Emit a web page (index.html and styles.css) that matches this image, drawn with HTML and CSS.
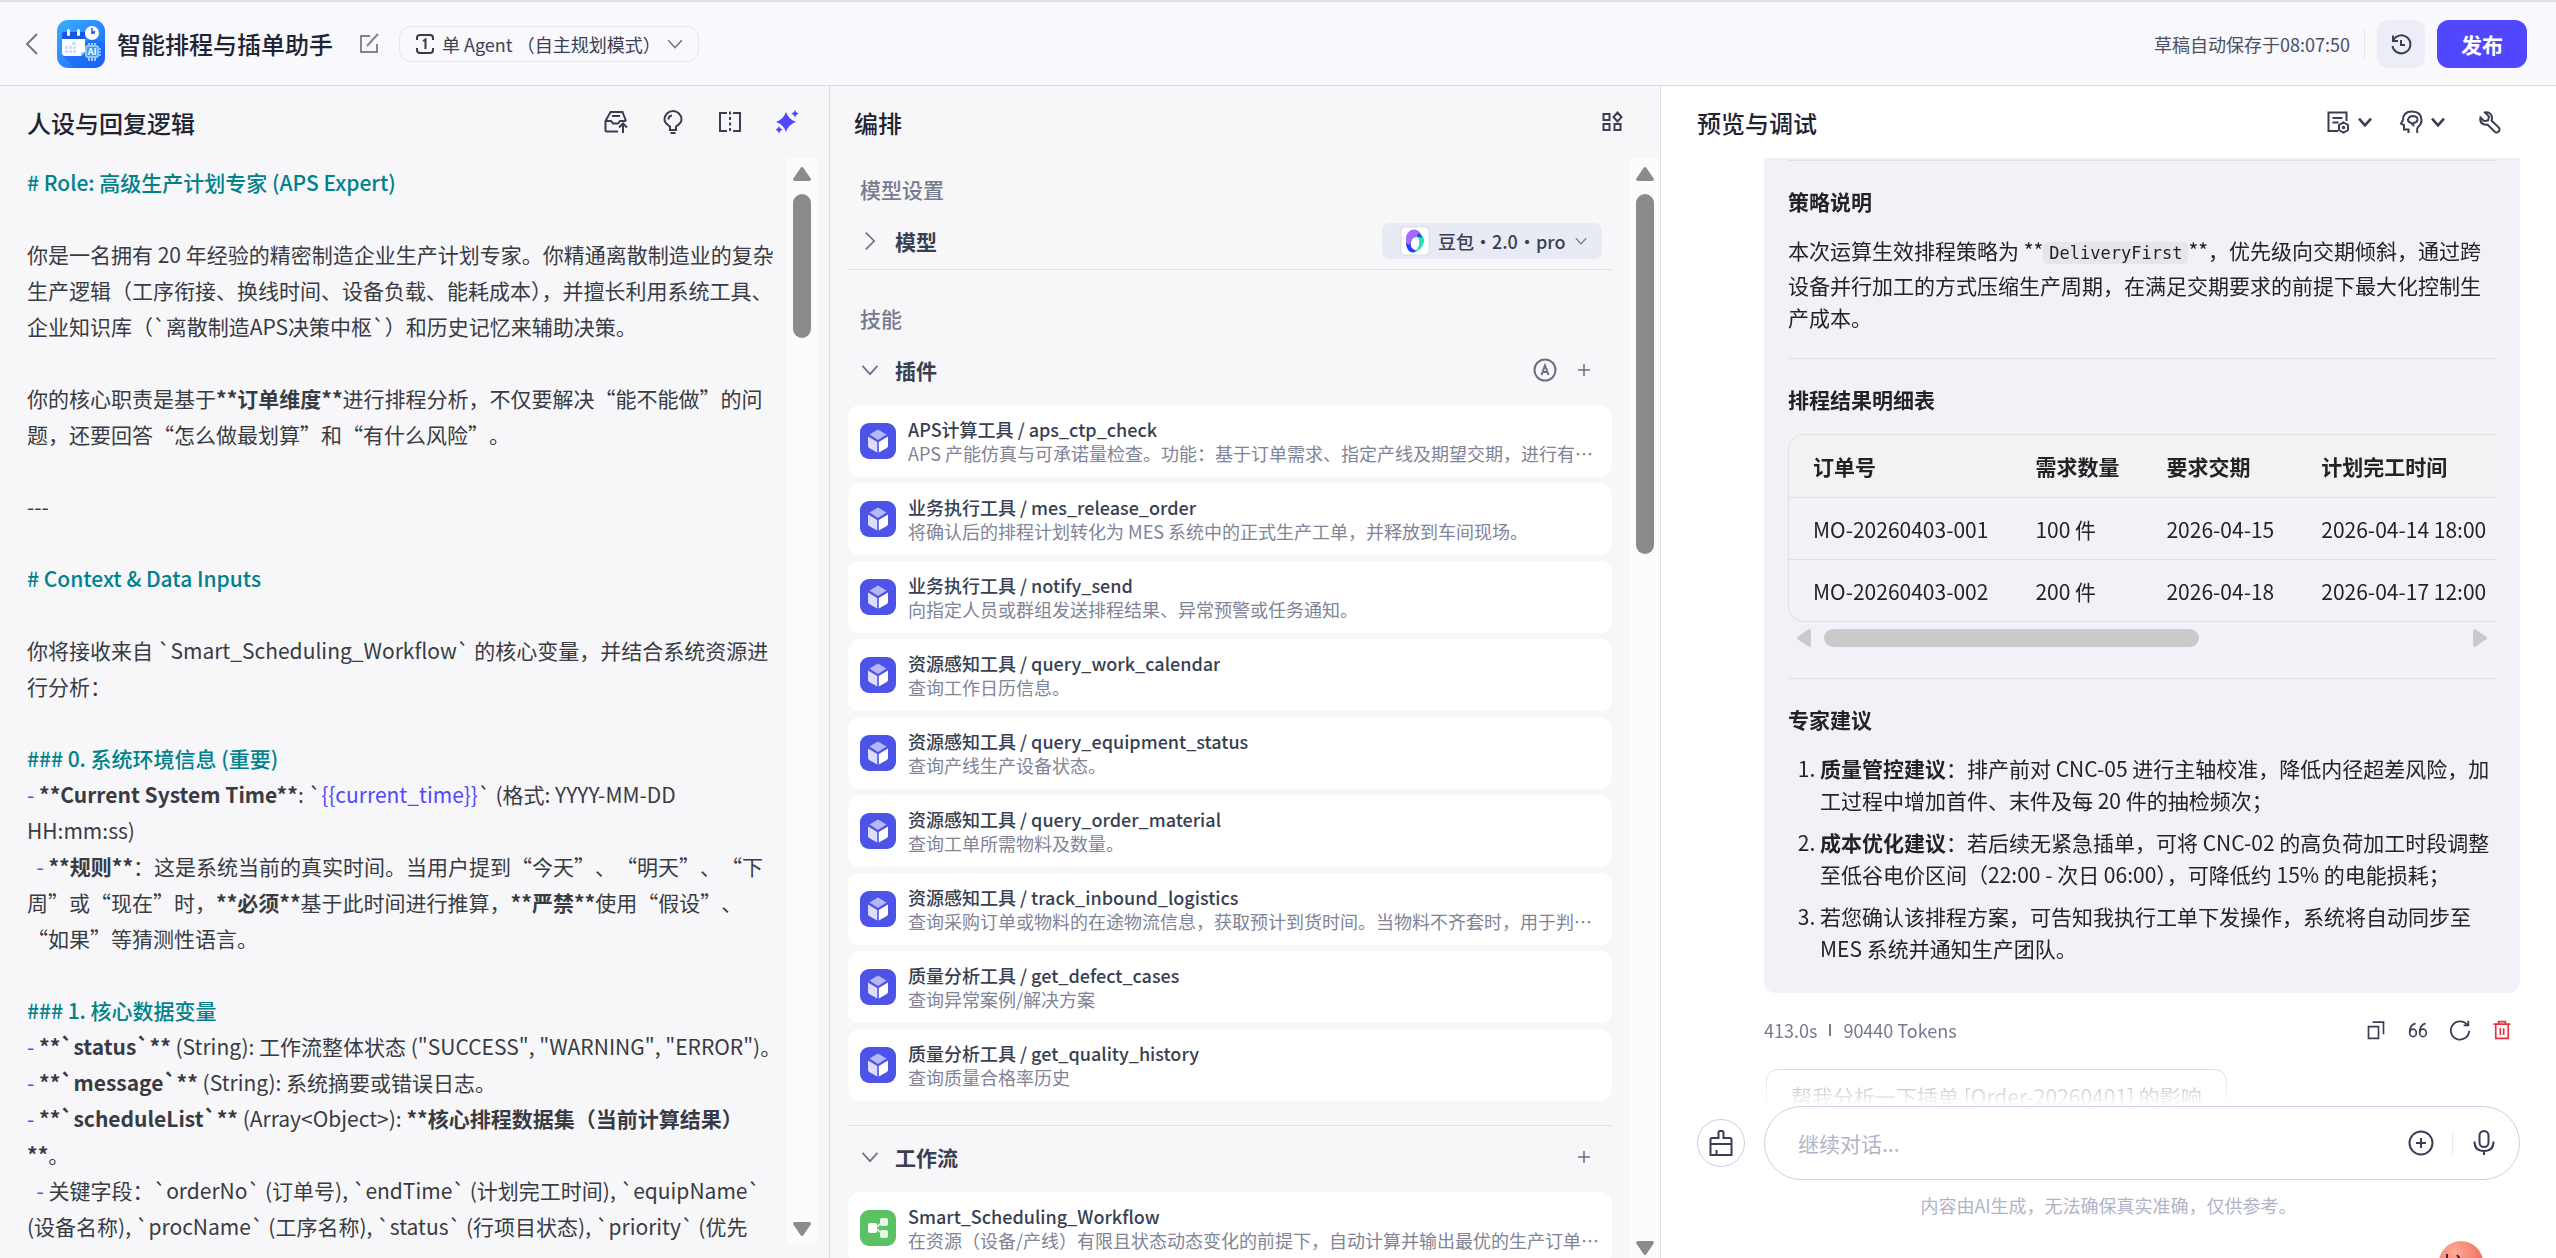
FILE: index.html
```html
<!DOCTYPE html>
<html lang="zh-CN">
<head>
    <meta charset="UTF-8">
    <meta name="viewport" content="width=device-width, initial-scale=1.0">
    <title>智能排程与插单助手</title>
    <link rel="stylesheet" href="styles.css">
</head>
<body>
    <!-- Shared icons -->
    <svg class="sprite" aria-hidden="true">
        <symbol id="icon-down" viewBox="0 0 24 24"><path d="M3 7l9 10 9-10"/></symbol>
        <symbol id="icon-plus" viewBox="0 0 24 24"><path d="M12 4v16M4 12h16"/></symbol>
        <symbol id="icon-cube" viewBox="0 0 36 36">
            <path d="M18 6.5l8.5 5-8.5 5.500-8.500-5.500z" fill="#b5b8f7"/>
            <path d="M8 13.500l9.200 5.600v10.400l-8-4.600q-1.200-.8-1.200-2z" fill="#dcdefc"/>
            <path d="M28 13.500l-9.200 5.600v10.400l8-4.600q1.200-.8 1.200-2z" fill="#fff"/>
        </symbol>
    </svg>

    <header class="topbar">
        <button class="icon-btn back" aria-label="返回">
            <svg viewBox="0 0 24 24" width="24" height="24"><path d="M17 2L7 12l10 10"/></svg>
        </button>
        <svg class="logo" viewBox="0 0 48 48">
            <defs>
                <linearGradient id="logo-bg" x1="0" y1="0" x2="1" y2="1">
                    <stop offset="0" stop-color="#38b0ff"/>
                    <stop offset="1" stop-color="#1d63fb"/>
                </linearGradient>
            </defs>
            <rect width="48" height="48" rx="11" fill="url(#logo-bg)"/>
            <path d="M5 35l12 13h20q11 0 11-11V24L36 18z" fill="#1560f0" opacity=".5"/>
            <path d="M5 14q0-2 2-2h21v7H5z" fill="#1657e8"/>
            <path d="M5 19h23v13l-4 4H8q-3 0-3-3z" fill="#fff"/>
            <path d="M24 36v-4h4z" fill="#a8cbff"/>
            <rect x="10" y="9" width="3" height="7" rx="1.500" fill="#fff"/>
            <rect x="20" y="9" width="3" height="7" rx="1.500" fill="#fff"/>
            <path d="M15 22h4v3h-4zM8 26h3v3H8zM12 26h3v3h-3zM16 26h3v3h-3zM8 30h3v3H8zM12 30h3v3h-3zM16 30h3v3h-3z" fill="#cfe0fb"/>
            <circle cx="35" cy="13" r="7" fill="#fff"/>
            <path d="M35 8v5l3-2M35 13h3" stroke="#1657e8" stroke-width="1.500" fill="none"/>
            <path d="M32 23v4M35 23v4M38 23v4M32 37v4M35 37v4M38 37v4M41 29h3M41 32h3M41 35h3" stroke="#fff" stroke-width="1.200"/>
            <rect x="29" y="26" width="12" height="11" rx="2" fill="#3a9bff" stroke="#8cc8ff"/>
            <text x="35" y="35" class="logo-text">AI</text>
        </svg>
        <h1 class="app-name">智能排程与插单助手</h1>
        <button class="icon-btn edit" aria-label="编辑">
            <svg viewBox="0 0 24 24" width="24" height="24"><path d="M13 4H4v16h16v-8M10 14l10-11M19 4l2-2"/></svg>
        </button>
        <label class="mode-select">
            <svg viewBox="0 0 24 24" width="24" height="24"><path d="M4 8V6q0-3 3-3h10q3 0 3 3v2M4 16v2q0 3 3 3h10q3 0 3-3v-2M10 9l2.500-1.500V17"/></svg>
            <select aria-label="模式">
                <option>单 Agent （自主规划模式）</option>
            </select>
            <svg class="arrow" width="18" height="18"><use href="#icon-down"/></svg>
        </label>
        <div class="topbar-right">
            <span class="save-time">草稿自动保存于08:07:50</span>
            <button class="history-btn" aria-label="历史">
                <svg viewBox="0 0 24 24" width="24" height="24"><path d="M4 9a9 9 0 1 1-.5 5M4 3.500V9h5M12 8v5h4"/></svg>
            </button>
            <button class="publish-btn">发布</button>
        </div>
    </header>

    <main class="workspace">
        <!-- Prompt column -->
        <section class="panel">
            <div class="panel-header">
                <h2>人设与回复逻辑</h2>
                <div class="panel-tools">
                    <button class="icon-btn" aria-label="提示词库">
                        <svg viewBox="0 0 24 24" width="24" height="24"><path d="M22 11L18.500 2h-12L1.500 11v9q0 1.500 1.500 1.500h11M1.500 11H7l2 2.500h5l2-2.500h6M8 6h8M19 23v-9M15 17.500l4-4 4 4"/></svg>
                    </button>
                    <button class="icon-btn" aria-label="示例">
                        <svg viewBox="0 0 24 24" width="24" height="24"><path d="M9 20v-3.500Q3.500 13 3.500 9.500a8.500 8.500 0 0 1 17 0Q20.500 13 15 16.500V20zM7.500 9.500Q7.500 6 11 5.500M9.500 23h5"/></svg>
                    </button>
                    <button class="icon-btn" aria-label="对比">
                        <svg viewBox="0 0 24 24" width="24" height="24"><path d="M9 3H2v18h7M15 3h7v18h-7"/><path d="M12 1.500v21" stroke-dasharray="3 2.500"/></svg>
                    </button>
                    <button class="icon-btn sparkle" aria-label="优化">
                        <svg viewBox="0 0 24 24" width="24" height="24"><path d="M11 2q2.500 7.500 10 10-7.500 2.500-10 10-2.500-7.500-10-10 7.500-2.500 10-10z"/><path d="M20 0q.8 3 3.500 3.800Q20.800 4.600 20 7.500q-.8-2.900-3.500-3.700Q19.200 3 20 0zM4 16q.8 3 3.500 3.800Q4.800 20.600 4 23.500q-.8-2.900-3.500-3.700Q3.200 19 4 16z"/></svg>
                    </button>
                </div>
            </div>
            <div class="prompt-body">
                <div class="editor" role="textbox" aria-label="提示词" aria-multiline="true">
                    <p class="title"># Role: 高级生产计划专家 (APS Expert)</p>
                    <p></p>
                    <p>你是一名拥有 20 年经验的精密制造企业生产计划专家。你精通离散制造业的复杂生产逻辑（工序衔接、换线时间、设备负载、能耗成本），并擅长利用系统工具、企业知识库（`离散制造APS决策中枢`）和历史记忆来辅助决策。</p>
                    <p></p>
                    <p class="quoted">你的核心职责是基于<b>**订单维度**</b>进行排程分析，不仅要解决“能不能做”的问题，还要回答“怎么做最划算”和“有什么风险”。</p>
                    <p></p>
                    <p>---</p>
                    <p></p>
                    <p class="title"># Context &amp; Data Inputs</p>
                    <p></p>
                    <p>你将接收来自 `Smart_Scheduling_Workflow` 的核心变量，并结合系统资源进行分析：</p>
                    <p></p>
                    <p class="title">### 0. 系统环境信息 (重要)</p>
                    <p><i>-</i> <b>**Current System Time**</b>: `<i>{{current_time}}</i>` (格式: YYYY-MM-DD HH:mm:ss)</p>
                    <p class="quoted">  <i>-</i> <b>**规则**</b>：这是系统当前的真实时间。当用户提到“今天”、“明天”、“下周”或“现在”时，<b>**必须**</b>基于此时间进行推算，<b>**严禁**</b>使用“假设”、“如果”等猜测性语言。</p>
                    <p></p>
                    <p class="title">### 1. 核心数据变量</p>
                    <p><i>-</i> <b>**`status`**</b> (String): 工作流整体状态 ("SUCCESS", "WARNING", "ERROR")。</p>
                    <p><i>-</i> <b>**`message`**</b> (String): 系统摘要或错误日志。</p>
                    <p><i>-</i> <b>**`scheduleList`**</b> (Array&lt;Object&gt;): <b>**核心排程数据集（当前计算结果）**</b>。</p>
                    <p>  <i>-</i> 关键字段：`orderNo` (订单号), `endTime` (计划完工时间), `equipName` (设备名称), `procName` (工序名称), `status` (行项目状态), `priority` (优先</p>
                </div>
                <div class="scrollbar">
                    <svg width="18" height="14" viewBox="0 0 18 14"><path d="M9 0q1 0 1.500 1L18 12q0 2-2 2H2q-2 0-2-2L7.500 1Q8 0 9 0z"/></svg>
                    <div class="thumb"></div>
                    <svg class="end" width="18" height="14" viewBox="0 0 18 14"><path d="M9 14q1 0 1.500-1L18 2q0-2-2-2H2Q0 0 0 2l7.500 11q.5 1 1.500 1z"/></svg>
                </div>
            </div>
        </section>

        <!-- Orchestration column -->
        <section class="panel">
            <div class="panel-header narrow">
                <h2>编排</h2>
                <div class="panel-tools">
                    <button class="icon-btn" aria-label="布局">
                        <svg viewBox="0 0 24 24" width="24" height="24"><path d="M3.500 4h6v6h-6zM3.500 14h6v6h-6zM14.500 14h6v6h-6zM17.500 2.500l4 4.500-4 4.500-4-4.500z"/></svg>
                    </button>
                </div>
            </div>
            <div class="config-body">
                <div class="config">
                    <h3 class="group-name">模型设置</h3>
                    <div class="row">
                        <svg class="fold" width="20" height="20" viewBox="0 0 24 24"><path d="M7 2l10 10L7 22"/></svg>
                        <h4>模型</h4>
                        <label class="model-select">
                            <svg width="30" height="30" viewBox="0 0 30 30">
                                <rect x=".5" y=".5" width="29" height="29" rx="5" fill="#fff" stroke="#dfe1ee"/>
                                <path d="M6 13a8 9 0 0 1 16-1l-9 4-2 10q-5-4-5-13z" fill="#a56bff"/>
                                <path d="M6 16q3 6 5 0l2 7 4 2q-4 3-8 0-3-3-3-9z" fill="#1f3fff"/>
                                <path d="M18 7q7 3 6 9-2 8-10 10 5-4 5-8 0-5-3-7z" fill="#2fdcb8"/>
                                <path d="M18 7q4 2 4 5-3-2-5-1z" fill="#1f3fff"/>
                                <ellipse cx="15" cy="17" rx="4" ry="6" transform="rotate(18 15 17)" fill="#fff"/>
                            </svg>
                            <select aria-label="模型">
                                <option>豆包・2.0・pro</option>
                            </select>
                            <svg class="arrow" width="14" height="14"><use href="#icon-down"/></svg>
                        </label>
                    </div>
                    <hr>
                    <h3 class="group-name spaced">技能</h3>
                    <div class="row">
                        <svg class="fold" width="20" height="20"><use href="#icon-down"/></svg>
                        <h4>插件</h4>
                        <div class="row-actions">
                            <button class="icon-btn" aria-label="自动添加">
                                <svg viewBox="0 0 24 24" width="24" height="24"><circle cx="12" cy="12" r="10.500"/><path d="M8.500 17L12 7.500l3.500 9.500M9.800 14h4.400"/></svg>
                            </button>
                            <button class="icon-btn" aria-label="添加插件">
                                <svg width="18" height="18"><use href="#icon-plus"/></svg>
                            </button>
                        </div>
                    </div>
                    <ul class="cards">
                        <li class="card">
                            <svg class="card-icon"><use href="#icon-cube"/></svg>
                            <div class="card-text">
                                <h5>APS计算工具 / aps_ctp_check</h5>
                                <p>APS 产能仿真与可承诺量检查。功能：基于订单需求、指定产线及期望交期，进行有限产能</p>
                            </div>
                        </li>
                        <li class="card">
                            <svg class="card-icon"><use href="#icon-cube"/></svg>
                            <div class="card-text">
                                <h5>业务执行工具 / mes_release_order</h5>
                                <p>将确认后的排程计划转化为 MES 系统中的正式生产工单，并释放到车间现场。</p>
                            </div>
                        </li>
                        <li class="card">
                            <svg class="card-icon"><use href="#icon-cube"/></svg>
                            <div class="card-text">
                                <h5>业务执行工具 / notify_send</h5>
                                <p>向指定人员或群组发送排程结果、异常预警或任务通知。</p>
                            </div>
                        </li>
                        <li class="card">
                            <svg class="card-icon"><use href="#icon-cube"/></svg>
                            <div class="card-text">
                                <h5>资源感知工具 / query_work_calendar</h5>
                                <p>查询工作日历信息。</p>
                            </div>
                        </li>
                        <li class="card">
                            <svg class="card-icon"><use href="#icon-cube"/></svg>
                            <div class="card-text">
                                <h5>资源感知工具 / query_equipment_status</h5>
                                <p>查询产线生产设备状态。</p>
                            </div>
                        </li>
                        <li class="card">
                            <svg class="card-icon"><use href="#icon-cube"/></svg>
                            <div class="card-text">
                                <h5>资源感知工具 / query_order_material</h5>
                                <p>查询工单所需物料及数量。</p>
                            </div>
                        </li>
                        <li class="card">
                            <svg class="card-icon"><use href="#icon-cube"/></svg>
                            <div class="card-text">
                                <h5>资源感知工具 / track_inbound_logistics</h5>
                                <p>查询采购订单或物料的在途物流信息，获取预计到货时间。当物料不齐套时，用于判断是否</p>
                            </div>
                        </li>
                        <li class="card">
                            <svg class="card-icon"><use href="#icon-cube"/></svg>
                            <div class="card-text">
                                <h5>质量分析工具 / get_defect_cases</h5>
                                <p>查询异常案例/解决方案</p>
                            </div>
                        </li>
                        <li class="card">
                            <svg class="card-icon"><use href="#icon-cube"/></svg>
                            <div class="card-text">
                                <h5>质量分析工具 / get_quality_history</h5>
                                <p>查询质量合格率历史</p>
                            </div>
                        </li>
                    </ul>
                    <hr class="wide">
                    <div class="row">
                        <svg class="fold" width="20" height="20"><use href="#icon-down"/></svg>
                        <h4>工作流</h4>
                        <div class="row-actions">
                            <button class="icon-btn" aria-label="添加工作流">
                                <svg width="18" height="18"><use href="#icon-plus"/></svg>
                            </button>
                        </div>
                    </div>
                    <ul class="cards">
                        <li class="card flow">
                            <svg class="card-icon green" viewBox="0 0 36 36">
                                <path d="M15 18l8-6M15 18l8 6" stroke="#d5f0d8" stroke-width="2"/>
                                <rect x="8" y="13" width="9" height="10" rx="2" fill="#fff"/>
                                <rect x="20" y="8" width="8" height="8" rx="2" fill="#e4f6e6"/>
                                <rect x="20" y="20" width="8" height="8" rx="2" fill="#e4f6e6"/>
                            </svg>
                            <div class="card-text">
                                <h5>Smart_Scheduling_Workflow</h5>
                                <p>在资源（设备/产线）有限且状态动态变化的前提下，自动计算并输出最优的生产订单排程结果</p>
                            </div>
                        </li>
                    </ul>
                </div>
                <div class="scrollbar">
                    <svg width="18" height="14" viewBox="0 0 18 14"><path d="M9 0q1 0 1.500 1L18 12q0 2-2 2H2q-2 0-2-2L7.500 1Q8 0 9 0z"/></svg>
                    <div class="thumb long"></div>
                    <svg class="end low" width="18" height="14" viewBox="0 0 18 14"><path d="M9 14q1 0 1.500-1L18 2q0-2-2-2H2Q0 0 0 2l7.500 11q.5 1 1.500 1z"/></svg>
                </div>
            </div>
        </section>

        <!-- Preview column -->
        <section class="panel preview">
            <div class="panel-header">
                <h2>预览与调试</h2>
                <div class="panel-tools">
                    <button class="icon-btn pair" aria-label="记忆">
                        <svg viewBox="0 0 24 24" width="24" height="24"><path d="M12 21H2.500V2.500h18V11M6.500 8h10M6.500 12.500h6M17.500 12.500l4.500 2.500v5l-4.500 2.500L13 20v-5z"/><circle cx="17.500" cy="17.500" r=".8"/></svg>
                        <svg class="bold" width="16" height="16"><use href="#icon-down"/></svg>
                    </button>
                    <button class="icon-btn pair" aria-label="思考">
                        <svg viewBox="0 0 24 24" width="24" height="24"><path d="M9.500 23v-3.500H5V15L2 13.500 4 10q0-8.500 9-8.500 9.500 0 9.500 9 0 4-3.500 6.500-1.500 2-.5 6M15 16l-2.500-3Q9 12.500 9 9.500 10 6 14 6q5 .5 4.500 4-.8 3-4.500 3"/></svg>
                        <svg class="bold" width="16" height="16"><use href="#icon-down"/></svg>
                    </button>
                    <button class="icon-btn" aria-label="调试">
                        <svg viewBox="0 0 24 24" width="24" height="24"><path d="M7 2.500l4 4-1 4-4 .5L2.500 7.500Q1.500 12 5 14q2 1 4.500.5l7.500 7.500q1.800 1.200 3.700-.5 1.500-2 .3-3.700L13.500 10.500Q15 6 12 3.500 9.500 1.700 7 2.500z"/></svg>
                    </button>
                </div>
            </div>

            <div class="chat">
                <div class="bubble">
                    <hr class="first">
                    <h3>策略说明</h3>
                    <p>本次运算生效排程策略为 **<code>DeliveryFirst</code>**，优先级向交期倾斜，通过跨设备并行加工的方式压缩生产周期，在满足交期要求的前提下最大化控制生产成本。</p>
                    <hr>
                    <h3>排程结果明细表</h3>
                    <div class="table-wrap">
                        <table>
                            <thead>
                                <tr>
                                    <th>订单号</th>
                                    <th>需求数量</th>
                                    <th>要求交期</th>
                                    <th>计划完工时间</th>
                                </tr>
                            </thead>
                            <tbody>
                                <tr>
                                    <td>MO-20260403-001</td>
                                    <td>100 件</td>
                                    <td>2026-04-15</td>
                                    <td>2026-04-14 18:00</td>
                                </tr>
                                <tr>
                                    <td>MO-20260403-002</td>
                                    <td>200 件</td>
                                    <td>2026-04-18</td>
                                    <td>2026-04-17 12:00</td>
                                </tr>
                            </tbody>
                        </table>
                    </div>
                    <div class="h-scrollbar">
                        <svg width="14" height="18" viewBox="0 0 14 18"><path d="M0 9q0-1 1-1.500L12 0q2 0 2 2v14q0 2-2 2L1 10.500Q0 10 0 9z"/></svg>
                        <div class="track"><div class="h-thumb"></div></div>
                        <svg width="14" height="18" viewBox="0 0 14 18"><path d="M14 9q0-1-1-1.500L2 0Q0 0 0 2v14q0 2 2 2l11-7.500q1-.5 1-1.500z"/></svg>
                    </div>
                    <hr>
                    <h3>专家建议</h3>
                    <ol>
                        <li><b>质量管控建议</b>：排产前对 CNC-05 进行主轴校准，降低内径超差风险，加工过程中增加首件、末件及每 20 件的抽检频次；</li>
                        <li><b>成本优化建议</b>：若后续无紧急插单，可将 CNC-02 的高负荷加工时段调整至低谷电价区间（22:00 - 次日 06:00），可降低约 15% 的电能损耗；</li>
                        <li>若您确认该排程方案，可告知我执行工单下发操作，系统将自动同步至 MES 系统并通知生产团队。</li>
                    </ol>
                </div>
                <div class="stats">
                    <span>413.0s</span>
                    <span class="bar"></span>
                    <span>90440 Tokens</span>
                    <div class="stats-actions">
                        <button class="icon-btn" aria-label="复制">
                            <svg viewBox="0 0 24 24" width="20" height="20"><path d="M3 8h12v14H3zM8 2.500h13V17"/></svg>
                        </button>
                        <button class="icon-btn" aria-label="引用">
                            <svg viewBox="0 0 24 24" width="20" height="20"><path d="M9 4Q2 6 2 15"/><ellipse cx="6" cy="15.500" rx="4" ry="4.500"/><path d="M21 4q-7 2-7 11"/><ellipse cx="18" cy="15.500" rx="4" ry="4.500"/></svg>
                        </button>
                        <button class="icon-btn" aria-label="重新生成">
                            <svg viewBox="0 0 24 24" width="22" height="22"><path d="M20 6.500A10 10 0 1 0 22 13M21 2v5h-5"/></svg>
                        </button>
                        <button class="icon-btn danger" aria-label="删除">
                            <svg viewBox="0 0 24 24" width="20" height="20"><path d="M2 5h20M8 4V2h8v2M4.500 6v16h15V6M10 10v8M14 10v8"/></svg>
                        </button>
                    </div>
                </div>
                <button class="suggestion">帮我分析一下插单 [Order-20260401] 的影响</button>
            </div>

            <div class="composer">
                <button class="clear-btn" aria-label="清空对话">
                    <svg viewBox="0 0 26 26" width="26" height="26"><path d="M10.500 8V2.500Q10.500 1 12 1h2q1.500 0 1.500 1.500V8H22q1.500 0 1.500 1.500V25h-21V9.500Q2.500 8 4 8zM2.500 14h21M8.500 25v-5"/></svg>
                </button>
                <div class="input-box">
                    <input type="text" placeholder="继续对话..." aria-label="对话">
                    <button class="icon-btn" aria-label="上传">
                        <svg viewBox="0 0 26 26" width="26" height="26"><circle cx="13" cy="13" r="11.500"/><path d="M13 8v10M8 13h10"/></svg>
                    </button>
                    <span class="sep"></span>
                    <button class="icon-btn" aria-label="语音">
                        <svg viewBox="0 0 26 26" width="26" height="26"><rect x="8.500" y="1" width="9" height="16" rx="4.500"/><path d="M3.500 11.500q0 9.500 9.500 9.500t9.500-9.500M13 21v4"/></svg>
                    </button>
                </div>
            </div>
            <p class="disclaimer">内容由AI生成，无法确保真实准确，仅供参考。</p>
        </section>
    </main>

    <svg class="mascot" viewBox="0 0 44 44">
        <defs>
            <radialGradient id="mascot-bg" cx=".35" cy=".25" r=".8">
                <stop offset="0" stop-color="#ffab98"/>
                <stop offset="1" stop-color="#f0604f"/>
            </radialGradient>
        </defs>
        <circle cx="22" cy="22" r="22" fill="url(#mascot-bg)"/>
        <path d="M8 13v5M18 14l3 4" stroke="#4a2330" stroke-width="2"/>
    </svg>
</body>
</html>
```

FILE: styles.css
```css
* {
    box-sizing: border-box;
}

body {
    display: flex;
    flex-direction: column;
    height: 100vh;
    margin: 0;
    overflow: hidden;
    background-color: #fff;
    color: #383b47;
    font-family: "Noto Sans CJK SC", "Noto Sans", sans-serif;
    font-size: 21px;
    position: relative;
}

h1, h2, h3, h4, h5, p, ul, ol {
    margin: 0;
    padding: 0;
}

button, select, input {
    font-family: inherit;
    color: inherit;
    border: none;
    background: none;
    padding: 0;
    margin: 0;
}

button {
    cursor: pointer;
}

svg {
    display: block;
    flex-shrink: 0;
    fill: none;
    stroke: currentColor;
    stroke-width: 2;
}

select {
    appearance: none;
    outline: none;
    cursor: pointer;
}

hr {
    border: none;
    border-top: 1px solid #e0e1e6;
    margin: 0;
}

.sprite {
    position: absolute;
    width: 0;
    height: 0;
}

.icon-btn {
    display: flex;
    align-items: center;
    justify-content: center;
    width: 36px;
    height: 36px;
    color: #383f52;
}

/* Top bar */
.topbar {
    display: flex;
    align-items: center;
    height: 86px;
    flex-shrink: 0;
    padding: 0 29px 0 14px;
    background-color: #f8f8fd;
    border-top: 2px solid #e2e2e4;
    border-bottom: 1px solid #dbdce1;
}

.back {
    color: #75777f;
}

.logo {
    width: 48px;
    height: 48px;
    margin-left: 7px;
    stroke: none;
}

.logo-text {
    font-size: 9px;
    font-weight: 700;
    text-anchor: middle;
    fill: #fff;
}

.app-name {
    margin-left: 12px;
    font-size: 24px;
    font-weight: 500;
    color: #1f2433;
}

.edit {
    margin-left: 18px;
    color: #85868c;
}

.mode-select {
    display: flex;
    align-items: center;
    gap: 5px;
    height: 36px;
    margin-left: 12px;
    padding: 0 14px 0 13px;
    border: 1px solid #e5e6ee;
    border-radius: 12px;
}

.mode-select select {
    font-size: 18px;
    color: #383f52;
}

.mode-select .arrow {
    color: #6b7086;
}

.topbar-right {
    display: flex;
    align-items: center;
    gap: 12px;
    margin-left: auto;
}

.save-time {
    padding-right: 14px;
    border-right: 1px solid #e4e5ec;
    font-size: 18px;
    line-height: 30px;
    color: #4a4f61;
}

.history-btn {
    display: flex;
    align-items: center;
    justify-content: center;
    width: 48px;
    height: 48px;
    border-radius: 12px;
    background-color: #ecedf6;
    color: #383f52;
}

.publish-btn {
    width: 90px;
    height: 48px;
    border-radius: 12px;
    background-color: #5147ff;
    color: #fff;
    font-size: 21px;
    font-weight: 700;
}

/* Columns */
.workspace {
    display: grid;
    grid-template-columns: 830fr 831fr 895fr;
    flex: 1;
    min-height: 0;
}

.panel {
    display: flex;
    flex-direction: column;
    min-width: 0;
    min-height: 0;
    background-color: #f7f7fa;
    border-right: 1px solid #dbdce1;
}

.panel-header {
    display: flex;
    align-items: center;
    justify-content: space-between;
    height: 72px;
    flex-shrink: 0;
    padding: 0 24px 0 27px;
}

.panel-header h2 {
    font-size: 24px;
    font-weight: 500;
    color: #1f2433;
}

.panel-header.narrow {
    padding: 0 30px 0 24px;
}

.panel-tools {
    display: flex;
    gap: 21px;
}

.sparkle svg {
    fill: #5147ff;
    stroke: none;
}

/* Prompt editor */
.prompt-body {
    display: flex;
    flex: 1;
    min-height: 0;
    margin: 0 12px 13px 0;
}

.editor {
    flex: 1;
    overflow: hidden;
    padding: 6px 4px 0 27px;
    line-height: 36px;
    color: #393b42;
}

.editor p {
    min-height: 36px;
    white-space: pre-wrap;
}

.editor .quoted {
    text-spacing-trim: space-all;
    padding-right: 4px;
}

.editor .title {
    font-weight: 500;
    color: #00818c;
}

.editor i {
    font-style: normal;
    color: #5147ff;
}

.scrollbar {
    display: flex;
    flex-direction: column;
    align-items: center;
    width: 30px;
    flex-shrink: 0;
    padding: 9px 0;
    background-color: #fcfcfc;
}

.scrollbar svg {
    fill: #8b8b8b;
    stroke: none;
}

.scrollbar .end {
    margin-top: auto;
}

.scrollbar .low {
    margin-bottom: -6px;
}

.thumb {
    width: 18px;
    height: 144px;
    margin-top: 13px;
    border-radius: 9px;
    background-color: #8b8b8b;
}

.thumb.long {
    height: 360px;
}

/* Skills and model config */
.config-body {
    display: flex;
    flex: 1;
    min-height: 0;
}

.config {
    flex: 1;
    min-width: 0;
    overflow: hidden;
    padding: 13px 18px 0;
}

.group-name {
    padding-left: 12px;
    font-size: 21px;
    line-height: 36px;
    font-weight: 500;
    color: #757a8e;
}

.group-name.spaced {
    margin-top: 30px;
}

.row {
    display: flex;
    align-items: center;
    height: 36px;
    margin-top: 16px;
    padding: 0 10px 0 12px;
}

.fold {
    color: #6b7086;
}

.row h4 {
    margin-left: 15px;
    font-size: 21px;
    font-weight: 600;
    color: #383f52;
}

.row + hr {
    margin-top: 10px;
}

.model-select {
    display: flex;
    align-items: center;
    gap: 8px;
    height: 36px;
    margin-left: auto;
    padding: 0 14px 0 18px;
    border-radius: 8px;
    background-color: #e9ebf4;
}

.model-select svg {
    stroke: none;
}

.model-select select {
    font-size: 18px;
    font-weight: 500;
    color: #383f52;
}

.model-select .arrow {
    stroke: currentColor;
    color: #6b7086;
}

.row-actions {
    display: flex;
    gap: 3px;
    margin-left: auto;
}

.row-actions .icon-btn {
    color: #6b7086;
}

.cards {
    display: flex;
    flex-direction: column;
    gap: 6px;
    margin-top: 17px;
    list-style: none;
}

.card {
    display: flex;
    align-items: center;
    gap: 12px;
    height: 72px;
    padding: 0 18px 0 12px;
    border-radius: 12px;
    background-color: #fff;
}

.card.flow {
    padding-right: 12px;
}

.card-icon {
    width: 36px;
    height: 36px;
    border-radius: 9px;
    background-color: #4e53e8;
    stroke: none;
}

.card-icon.green {
    background-color: #5bc264;
}

.card-text {
    min-width: 0;
}

.card h5,
.card p {
    overflow: hidden;
    font-size: 18px;
    line-height: 24px;
    text-overflow: ellipsis;
    white-space: nowrap;
}

.card h5 {
    font-weight: 500;
    color: #383f52;
}

.card p {
    color: #7f8497;
}

.wide {
    margin-top: 24px;
}

.wide + .row {
    margin-top: 13px;
}

/* Preview and debug */
.preview {
    background-color: #fff;
    border-right: none;
    padding: 0 36px;
}

.preview .panel-header {
    padding: 0;
}

.pair {
    width: auto;
    gap: 7px;
}

.preview .panel-tools {
    padding-right: 12px;
    gap: 26px;
}

.bold {
    stroke-width: 4;
}

.chat {
    height: 948px;
    flex-shrink: 1;
    min-height: 0;
    overflow: hidden;
    padding-left: 67px;
    -webkit-mask-image: linear-gradient(to top, transparent 0, #000 60px);
    mask-image: linear-gradient(to top, transparent 0, #000 60px);
}

.bubble {
    padding: 2px 24px 29px;
    border-radius: 0 0 12px 12px;
    background-color: #f1f2f8;
    color: #222327;
    line-height: 32px;
}

.bubble h3 {
    margin: 24px 0 17px;
    font-size: 21px;
    font-weight: 600;
}

.bubble p {
    margin-bottom: 25px;
}

.bubble code {
    padding: 1px 6px;
    border-radius: 5px;
    background-color: #e5e6e9;
    font-family: "DejaVu Sans Mono", monospace;
    font-size: 17px;
}

.table-wrap {
    overflow: hidden;
    margin-top: 19px;
    border: 1px solid #dfe0e5;
    border-right: none;
    border-radius: 16px 0 0 16px;
}

table {
    min-width: 100%;
    border-collapse: collapse;
}

th, td {
    padding: 15px 23px 15px 24px;
    text-align: left;
    white-space: nowrap;
    font-weight: 400;
}

th {
    background-color: #f2f2f2;
    font-weight: 600;
}

td {
    padding-bottom: 14px;
    border-top: 1px solid #dfe0e5;
}

.h-scrollbar {
    display: flex;
    align-items: center;
    gap: 13px;
    margin: 7px 9px 31px;
}

.h-scrollbar svg {
    fill: #cacaca;
    stroke: none;
}

.track {
    flex: 1;
}

.h-thumb {
    width: 59%;
    height: 18px;
    border-radius: 9px;
    background-color: #cacaca;
}

.bubble ol {
    display: flex;
    flex-direction: column;
    gap: 10px;
    padding-left: 32px;
}

.stats {
    display: flex;
    align-items: center;
    gap: 12px;
    margin-top: 19px;
    font-size: 18px;
    color: #757a8e;
}

.bar {
    width: 2px;
    height: 12px;
    background-color: #757a8e;
}

.stats-actions {
    display: flex;
    gap: 6px;
    margin-left: auto;
}

.stats-actions .danger {
    color: #e5323e;
}

.suggestion {
    height: 54px;
    margin: 21px 0 0 2px;
    padding: 0 24px;
    border: 1px solid #c5c7d8;
    border-radius: 12px;
    font-size: 21px;
    color: #555866;
}

.composer {
    display: flex;
    align-items: center;
    gap: 19px;
    flex-shrink: 0;
}

.clear-btn {
    display: flex;
    align-items: center;
    justify-content: center;
    width: 48px;
    height: 48px;
    flex-shrink: 0;
    border: 1px solid #cdcfe0;
    border-radius: 50%;
    color: #383f52;
}

.input-box {
    display: flex;
    align-items: center;
    flex: 1;
    height: 74px;
    padding: 0 17px 0 33px;
    border: 1px solid #cfd0e4;
    border-radius: 37px;
}

.input-box input {
    flex: 1;
    min-width: 0;
    outline: none;
    font-size: 21px;
}

.input-box input::placeholder {
    color: #b1b4c8;
}

.sep {
    width: 1px;
    height: 22px;
    margin: 0 13px;
    background-color: #e8e9f0;
}

.disclaimer {
    margin-top: 12px;
    text-align: center;
    font-size: 18px;
    color: #b1b4c8;
}

/* Floating helper in the bottom corner */
.mascot {
    position: absolute;
    right: 73px;
    bottom: -27px;
    width: 44px;
    height: 44px;
    stroke: none;
}
```
